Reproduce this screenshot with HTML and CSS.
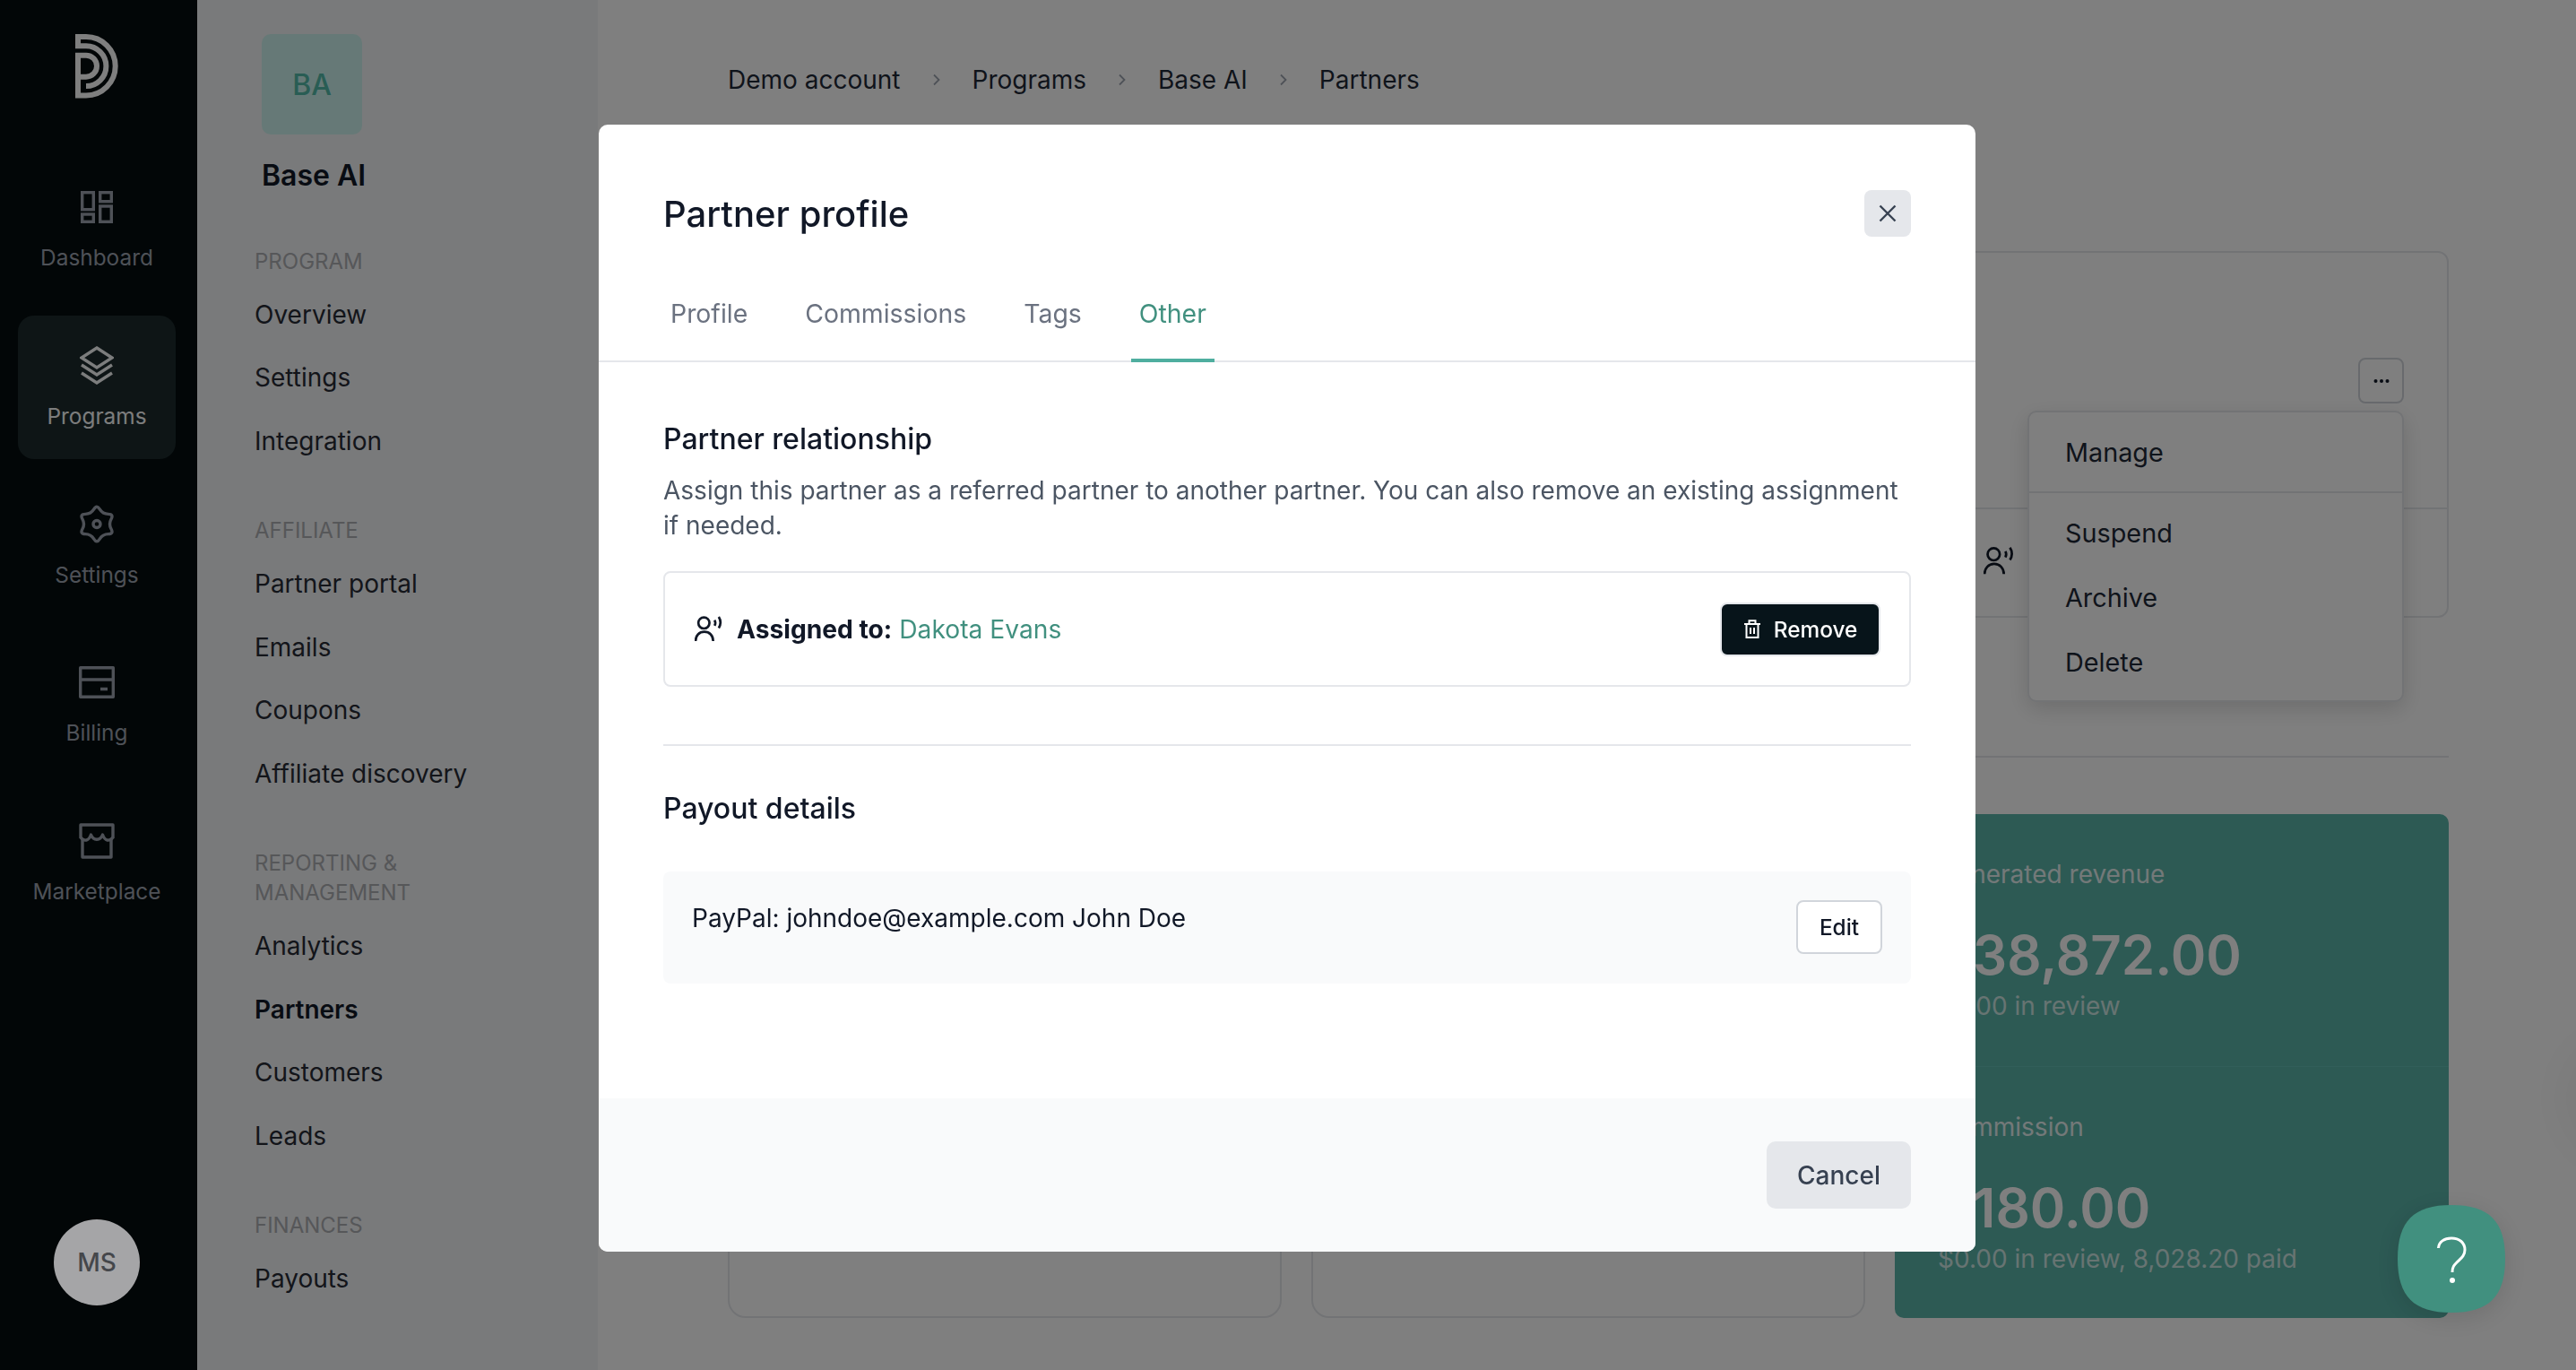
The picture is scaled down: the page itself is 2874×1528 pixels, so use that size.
FILE: index.html
```html
<!DOCTYPE html>
<html lang="en">
<head>
<meta charset="utf-8">
<title>Partner profile</title>
<link rel="stylesheet" href="styles.css">
</head>
<body>
<div class="app">
  <aside class="rail">
    <svg class="logo" width="48" height="72" viewBox="0 0 48 72"><path d="M12 58.1A22.4 22.4 0 0 0 12 13.3H3V3H12A32.7 32.7 0 0 1 12 68.4H3V23.7H12A12 12 0 0 1 12 47.7H6" fill="none" stroke="currentColor" stroke-width="6"/></svg>
    <nav class="rail-nav">
      <a class="rail-item"><span class="rail-icon"><svg width="36" height="36" viewBox="0 0 36 36" fill="none" stroke="currentColor" stroke-width="3.4"><rect x="1.7" y="1.7" width="12.6" height="19"/><rect x="21.7" y="1.7" width="12.6" height="10"/><rect x="1.7" y="26" width="12.6" height="8.3"/><rect x="21.7" y="17" width="12.6" height="17.3"/></svg></span><span>Dashboard</span></a>
      <a class="rail-item active"><span class="rail-icon"><svg width="38" height="43" viewBox="0 0 38 43" fill="none" stroke="currentColor" stroke-width="3.4"><path d="M19 2 36 13 19 24 2 13Z"/><path d="M2 21 19 32 36 21"/><path d="M2 30 19 41 36 30"/></svg></span><span>Programs</span></a>
      <a class="rail-item"><span class="rail-icon"><svg width="38" height="43" viewBox="0 -2 38 43" fill="none" stroke="currentColor" stroke-width="3.4" stroke-linejoin="round"><path d="M15.75 2.87Q19 -2.5 22.25 2.87Q25.5 8.24 31.78 8.37Q38.05 8.5 35.03 14Q32 19.5 35.03 25Q38.05 30.5 31.78 30.63Q25.5 30.76 22.25 36.13Q19 41.5 15.75 36.13Q12.5 30.76 6.23 30.63Q-.05 30.5 2.98 25Q6 19.5 2.98 14Q-.05 8.5 6.23 8.37Q12.5 8.24 15.75 2.87Z"/><circle cx="19" cy="19.5" r="4"/></svg></span><span>Settings</span></a>
      <a class="rail-item"><span class="rail-icon"><svg width="40" height="36" viewBox="0 0 40 36" fill="none" stroke="currentColor" stroke-width="3.4" stroke-linejoin="round"><rect x="1.7" y="1.7" width="36.6" height="32.6"/><path d="M2 15H38M24 25.5H32"/></svg></span><span>Billing</span></a>
      <a class="rail-item"><span class="rail-icon"><svg width="40" height="40" viewBox="0 0 40 40" fill="none" stroke="currentColor" stroke-width="3.4" stroke-linejoin="round"><path d="M2 17V2H38V17"/><path d="M2 16C6 21 11 20 13.5 13 16 20 24 20 26.5 13 29 20 34 21 38 16"/><path d="M4 18V38H36V18"/></svg></span><span>Marketplace</span></a>
    </nav>
    <div class="avatar">MS</div>
  </aside>

  <aside class="subnav">
    <div class="tile">BA</div>
    <div class="brand">Base AI</div>
    <div class="nav-label first">PROGRAM</div>
    <a class="nav-item">Overview</a>
    <a class="nav-item">Settings</a>
    <a class="nav-item">Integration</a>
    <div class="nav-label">AFFILIATE</div>
    <a class="nav-item">Partner portal</a>
    <a class="nav-item">Emails</a>
    <a class="nav-item">Coupons</a>
    <a class="nav-item">Affiliate discovery</a>
    <div class="nav-label">REPORTING &amp;<br>MANAGEMENT</div>
    <a class="nav-item">Analytics</a>
    <a class="nav-item current">Partners</a>
    <a class="nav-item">Customers</a>
    <a class="nav-item">Leads</a>
    <div class="nav-label">FINANCES</div>
    <a class="nav-item">Payouts</a>
  </aside>

  <main class="main">
    <div class="crumbs">
      <span>Demo account</span><svg class="chev" width="8" height="14" viewBox="0 0 8 14"><path d="M1 1.5 6.5 7 1 12.5" fill="none" stroke="currentColor" stroke-width="1.8"/></svg>
      <span>Programs</span><svg class="chev" width="8" height="14" viewBox="0 0 8 14"><path d="M1 1.5 6.5 7 1 12.5" fill="none" stroke="currentColor" stroke-width="1.8"/></svg>
      <span>Base AI</span><svg class="chev" width="8" height="14" viewBox="0 0 8 14"><path d="M1 1.5 6.5 7 1 12.5" fill="none" stroke="currentColor" stroke-width="1.8"/></svg>
      <span>Partners</span>
    </div>

    <section class="partner-card">
      <div class="partner-top">
        <button class="more"><svg width="20" height="6" viewBox="0 0 20 6"><circle cx="3.5" cy="3" r="2" fill="currentColor"/><circle cx="10" cy="3" r="2" fill="currentColor"/><circle cx="16.5" cy="3" r="2" fill="currentColor"/></svg></button>
      </div>
      <div class="partner-row">
        <div class="partner-ref">
          <svg class="voice" width="34" height="32" viewBox="0 0 30 27" fill="none" stroke="currentColor" stroke-width="2.4"><circle cx="10" cy="7.5" r="6"/><path d="M1 27C1 21 5 17 10.5 17 16 17 20 21 20 27"/><path d="M21.5 4.5Q23.2 7.5 21.5 10.5"/><path d="M26 1Q29.8 7 26 13"/></svg>
          <span>Dakota Evans</span>
        </div>
      </div>
      <div class="menu">
        <div class="menu-top"><a class="menu-item">Manage</a></div>
        <div class="menu-rest">
          <a class="menu-item">Suspend</a>
          <a class="menu-item">Archive</a>
          <a class="menu-item">Delete</a>
        </div>
      </div>
    </section>

    <hr class="rule">

    <section class="stats">
      <div class="stat-empty"></div>
      <div class="stat-empty"></div>
      <div class="stat-teal">
        <div class="stat">
          <div class="stat-label">Generated revenue</div>
          <div class="stat-value">$38,872.00</div>
          <div class="stat-sub">$0.00 in review</div>
        </div>
        <div class="stat second">
          <div class="stat-label">Commission</div>
          <div class="stat-value">$180.00</div>
          <div class="stat-sub">$0.00 in review, 8,028.20 paid</div>
        </div>
      </div>
    </section>
  </main>
</div>

<div class="edge-shade"></div>

<div class="overlay">
  <div class="modal">
    <header class="modal-head">
      <h1 class="modal-title">Partner profile</h1>
      <button class="close"><svg width="20" height="20" viewBox="0 0 20 20"><path d="M1.5 1.5 18.5 18.5M18.5 1.5 1.5 18.5" fill="none" stroke="currentColor" stroke-width="2.4"/></svg></button>
    </header>
    <div class="tabs">
      <a class="tab">Profile</a>
      <a class="tab">Commissions</a>
      <a class="tab">Tags</a>
      <a class="tab on">Other</a>
    </div>
    <div class="modal-body">
      <h2 class="heading first">Partner relationship</h2>
      <p class="desc">Assign this partner as a referred partner to another partner. You can also remove an existing assignment if needed.</p>
      <div class="assign">
        <div class="assign-info">
          <svg width="31" height="28" viewBox="0 0 30 27" fill="none" stroke="currentColor" stroke-width="2.6"><circle cx="10" cy="7.5" r="6"/><path d="M1 27C1 21 5 17 10.5 17 16 17 20 21 20 27"/><path d="M21.5 4.5Q23.2 7.5 21.5 10.5"/><path d="M26 1Q29.8 7 26 13"/></svg>
          <span><b>Assigned to:</b> <a class="link">Dakota Evans</a></span>
        </div>
        <button class="remove"><svg width="20" height="21" viewBox="0 0 20 21" fill="none" stroke="currentColor" stroke-width="2"><path d="M1 5H19M3.5 5V20H16.5V5M6.5 5V1.2H13.5V5M8 9V16M12 9V16"/></svg><span>Remove</span></button>
      </div>
      <hr class="sep">
      <h2 class="heading">Payout details</h2>
      <div class="payout">
        <span>PayPal: johndoe@example.com John Doe</span>
        <button class="edit">Edit</button>
      </div>
    </div>
    <footer class="modal-foot"><button class="cancel">Cancel</button></footer>
  </div>
</div>

<button class="help"><svg width="120" height="120" viewBox="0 0 120 120"><path d="M60 0C102 0 120 18 120 60 120 102 102 120 60 120 18 120 0 102 0 60 0 18 18 0 60 0Z" fill="#41907f"/><path d="M45.5 48C46 41 52 37 60 37 69 37 75 42 75 50 75 57 70 60 66 64 63 67 61 69 61 75" fill="none" stroke="#fff" stroke-width="3"/><circle cx="61" cy="84" r="3" fill="#fff"/></svg></button>
</body>
</html>
```
FILE: styles.css
```css
* { box-sizing: border-box; }
html, body { margin: 0; height: 100%; overflow: hidden; }
body { font-family: Inter, "Liberation Sans", sans-serif; color: #111827; background: #fff; }
button { font-family: inherit; cursor: pointer; padding: 0; }
h1, h2, p { margin: 0; }
hr { margin: 0; border: 0; }

.app { display: flex; height: 1528px; }

/* primary rail */
.rail { width: 220px; flex: none; background: #040c0e; color: #9ca3af; display: flex; flex-direction: column; align-items: center; padding-right: 4px; }
.logo { color: #fff; margin-top: 38px; flex: none; }
.rail-nav { display: flex; flex-direction: column; gap: 16.75px; margin-top: 65px; }
.rail-item { width: 176px; height: 160px; border-radius: 18px; display: flex; flex-direction: column; align-items: center; padding-top: 34px; font-size: 24.4px; line-height: 30px; }
.rail-item.active { background: #1c2a2c; color: #f9fafb; }
.rail-icon { height: 44px; display: flex; align-items: center; justify-content: center; margin-bottom: 19px; }
.avatar { width: 96px; height: 96px; border-radius: 50%; background: #a5a5a7; color: #45474b; display: flex; align-items: center; justify-content: center; font-size: 28px; font-weight: 500; margin-top: auto; margin-bottom: 72px; position: relative; z-index: 60; }

/* secondary nav */
.subnav { width: 447px; flex: none; background: #f3f4f6; padding: 38px 0 0 64px; }
.tile { width: 112px; height: 112px; margin-left: 8px; border-radius: 10px; background: #cdf3ee; color: #52baa9; display: flex; align-items: center; justify-content: center; font-size: 32px; font-weight: 500; }
.brand { margin: 26px 0 0 8px; font-size: 32px; line-height: 40px; font-weight: 600; }
.nav-label { margin-top: 48.25px; margin-bottom: 7.75px; font-size: 24px; line-height: 33px; color: #acaeb3; }
.nav-label.first { margin-top: 59px; margin-bottom: 7.25px; }
.nav-item { display: flex; align-items: center; height: 70.5px; font-size: 28px; color: #262a34; }
.nav-item.current { font-weight: 600; color: #111827; }

/* main */
.main { flex: 1; min-width: 0; padding: 0 142px 0 145px; background: #fff; }
.crumbs { height: 178px; display: flex; align-items: center; gap: 36px; font-size: 28px; color: #1f2937; }
.chev { color: #9ca3af; }
.partner-card { position: relative; margin-top: 102px; height: 409px; border: 2px solid #e5e7eb; border-radius: 12px; display: flex; flex-direction: column; }
.partner-top { height: 286px; border-bottom: 2px solid #e5e7eb; display: flex; justify-content: flex-end; align-items: flex-start; padding: 117px 48px 0 0; }
.more { width: 51px; height: 51px; background: #fff; border: 2px solid #d1d5db; border-radius: 8px; color: #111827; display: flex; align-items: center; justify-content: center; }
.partner-row { flex: 1; display: flex; justify-content: flex-end; align-items: center; }
.partner-ref { width: 517px; display: flex; align-items: center; gap: 14px; font-size: 28px; color: #6b7280; }
.voice { color: #111827; margin-top: -6px; }
.menu { position: absolute; top: 176px; right: 48px; width: 420px; height: 325px; background: #fff; border: 2px solid #e5e7eb; border-radius: 10px; box-shadow: 0 8px 24px rgba(0,0,0,.14); }
.menu-top { height: 90px; border-bottom: 2px solid #e5e7eb; display: flex; align-items: center; }
.menu-rest { padding-top: 8px; }
.menu-item { display: flex; align-items: center; height: 72px; padding-left: 40px; font-size: 28.8px; color: #1f2937; }
.rule { height: 2px; background: #e5e7eb; margin-top: 154px; }
.stats { margin-top: 63px; height: 562px; display: grid; grid-template-columns: repeat(3, 1fr); gap: 33px; }
.stat-empty { border: 2px solid #e5e7eb; border-radius: 20px; }
.stat-teal { background: #5ab4a9; border-radius: 10px; color: #fff; }
.stat { height: 281px; padding: 49px 48px 0; }
.stat.second { border-top: 1px solid #63bdb2; }
.stat-label { font-size: 28px; line-height: 36px; opacity: .85; }
.stat-value { margin-top: 37px; font-size: 60px; line-height: 70px; font-weight: 600; }
.stat-sub { margin-top: 4px; font-size: 28px; line-height: 36px; opacity: .7; }

.edge-shade { position: fixed; left: 2900px; top: 1195px; width: 60px; height: 60px; border-radius: 50%; z-index: 40; box-shadow: 0 0 60px 40px rgba(0,0,0,.05); }

/* modal */
.overlay { position: fixed; inset: 0; z-index: 50; background: rgba(0,0,0,.5); padding: 139px 0 0 668px; }
.modal { width: 1536px; height: 1257px; background: #fff; border-radius: 10px; overflow: hidden; display: flex; flex-direction: column; }
.modal-head { display: flex; justify-content: space-between; align-items: flex-start; padding: 73px 72px 0; }
.modal-title { font-size: 40px; line-height: 52px; font-weight: 500; padding-top: 1px; }
.close { width: 52px; height: 52px; border: 0; border-radius: 8px; background: #e5e7eb; color: #374151; display: flex; align-items: center; justify-content: center; }
.tabs { display: flex; gap: 46px; margin-top: 29px; height: 110px; padding-left: 71px; border-bottom: 2px solid #e5e7eb; }
.tab { height: 110px; padding: 0 9px; display: flex; align-items: center; font-size: 28.4px; color: #6b7280; }
.tab.on { color: #41907f; box-shadow: inset 0 -4px 0 #4fae9f; }
.modal-body { padding: 0 72px; flex: 1; }
.heading { font-size: 32px; line-height: 44px; font-weight: 500; margin-top: 48px; }
.heading.first { margin-top: 64px; }
.desc { margin-top: 15.5px; font-size: 28px; line-height: 39px; color: #4b5563; }
.assign { margin-top: 31.5px; height: 129px; border: 2px solid #e5e7eb; border-radius: 8px; padding: 0 32px 0 33px; display: flex; justify-content: space-between; align-items: center; }
.assign-info { display: flex; align-items: center; gap: 16px; font-size: 28.2px; }
.assign-info svg { margin-top: -2px; }
.assign-info b { font-weight: 700; }
.link { color: #41907f; }
.remove { width: 179px; height: 60px; background: #07141a; border: 2px solid #e5e7eb; border-radius: 8px; color: #fff; display: flex; align-items: center; justify-content: center; gap: 14px; font-size: 24.4px; font-weight: 500; }
.sep { height: 2px; background: #e5e7eb; margin-top: 64px; }
.payout { margin-top: 48px; height: 125px; background: #f9fafb; border-radius: 8px; padding: 32px 32px 0; display: flex; justify-content: space-between; align-items: flex-start; font-size: 28px; line-height: 40px; }
.edit { width: 96px; height: 60px; background: #fff; border: 2px solid #d1d5db; border-radius: 8px; font-size: 24.4px; font-weight: 500; color: #111827; }
.modal-foot { height: 171px; flex: none; background: #f9fafb; display: flex; justify-content: flex-end; align-items: flex-start; padding: 48px 72px 0 0; }
.cancel { width: 161px; height: 75px; border: 0; border-radius: 10px; background: #e5e7eb; font-size: 28px; font-weight: 500; color: #374151; }

.help { position: fixed; left: 2675px; top: 1344px; z-index: 60; width: 120px; height: 120px; border: 0; background: none; filter: drop-shadow(0 6px 14px rgba(0,0,0,.12)); display: flex; }
```
